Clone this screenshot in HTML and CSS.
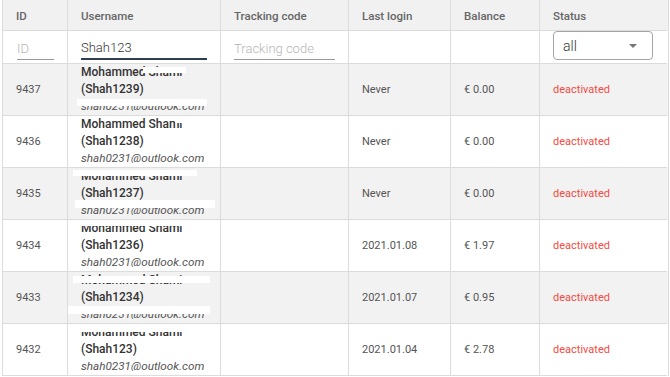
FILE: index.html
```html
<!DOCTYPE html>
<html lang="en">
<head>
<meta charset="utf-8">
<title>Users</title>
<link rel="stylesheet" href="styles.css">
</head>
<body>
<div class="table">
  <div class="row head">
    <div class="cell">ID</div>
    <div class="cell">Username</div>
    <div class="cell">Tracking code</div>
    <div class="cell">Last login</div>
    <div class="cell">Balance</div>
    <div class="cell">Status</div>
  </div>
  <div class="row filter">
    <div class="cell"><input class="inp inp-id" placeholder="ID"></div>
    <div class="cell"><input class="inp inp-user" value="Shah123"></div>
    <div class="cell"><input class="inp inp-track" placeholder="Tracking code"></div>
    <div class="cell"></div>
    <div class="cell"></div>
    <div class="cell cell-select">
      <div class="select"><span>all</span><span class="caret"></span></div>
    </div>
  </div>

  <div class="row data odd">
    <div class="cell">9437</div>
    <div class="cell usercell">
      <div class="user"><span class="name">Mohammed Shami</span><span class="name">(Shah1239)</span><span class="email">shah0231@outlook.com</span></div>
      <span class="redact r37a"></span><span class="redact r37b"></span>
    </div>
    <div class="cell"></div>
    <div class="cell">Never</div>
    <div class="cell">€ 0.00</div>
    <div class="cell status">deactivated</div>
  </div>
  <div class="row data">
    <div class="cell">9436</div>
    <div class="cell usercell">
      <div class="user"><span class="name">Mohammed Shami</span><span class="name">(Shah1238)</span><span class="email">shah0231@outlook.com</span></div>
      <span class="redact r36a"></span>
    </div>
    <div class="cell"></div>
    <div class="cell">Never</div>
    <div class="cell">€ 0.00</div>
    <div class="cell status">deactivated</div>
  </div>
  <div class="row data odd">
    <div class="cell">9435</div>
    <div class="cell usercell">
      <div class="user"><span class="name">Mohammed Shami</span><span class="name">(Shah1237)</span><span class="email">shah0231@outlook.com</span></div>
      <span class="redact r35a"></span><span class="redact r35b"></span>
    </div>
    <div class="cell"></div>
    <div class="cell">Never</div>
    <div class="cell">€ 0.00</div>
    <div class="cell status">deactivated</div>
  </div>
  <div class="row data">
    <div class="cell">9434</div>
    <div class="cell usercell">
      <div class="user"><span class="name">Mohammed Shami</span><span class="name">(Shah1236)</span><span class="email">shah0231@outlook.com</span></div>
      <span class="redact r34a"></span>
    </div>
    <div class="cell"></div>
    <div class="cell">2021.01.08</div>
    <div class="cell">€ 1.97</div>
    <div class="cell status">deactivated</div>
  </div>
  <div class="row data odd">
    <div class="cell">9433</div>
    <div class="cell usercell">
      <div class="user"><span class="name">Mohammed Shami</span><span class="name">(Shah1234)</span><span class="email">shah0231@outlook.com</span></div>
      <span class="redact r33a"></span><span class="redact r33b"></span>
    </div>
    <div class="cell"></div>
    <div class="cell">2021.01.07</div>
    <div class="cell">€ 0.95</div>
    <div class="cell status">deactivated</div>
  </div>
  <div class="row data">
    <div class="cell">9432</div>
    <div class="cell usercell">
      <div class="user"><span class="name">Mohammed Shami</span><span class="name">(Shah123)</span><span class="email">shah0231@outlook.com</span></div>
      <span class="redact r32a"></span>
    </div>
    <div class="cell"></div>
    <div class="cell">2021.01.04</div>
    <div class="cell">€ 2.78</div>
    <div class="cell status">deactivated</div>
  </div>
</div>
</body>
</html>
```
FILE: styles.css
```css
html, body {
  margin: 0;
  padding: 0;
  background: #fff;
}
body {
  font-family: Roboto, "Liberation Sans", sans-serif;
  font-size: 11px;
  color: #555;
}
.table {
  margin-left: 2px;
  width: 666px;
  border-right: 1px solid #dcdcdc;
  box-sizing: content-box;
}
.row {
  display: grid;
  grid-template-columns: 65px 153px 128px 102px 89px 128px;
}
.cell {
  border-left: 1px solid #dcdcdc;
  border-bottom: 1px solid #dcdcdc;
  padding-left: 13px;
  display: flex;
  align-items: center;
  box-sizing: border-box;
  min-width: 0;
}
.head {
  background: #f1f1f1;
}
.head .cell {
  height: 31px;
  font-weight: 500;
  color: #666;
  font-size: 11.5px;
  padding-top: 1px;
}
.filter {
  background: #fff;
}
.filter .cell {
  height: 33px;
  align-items: flex-end;
  padding-bottom: 3px;
}
.inp {
  font-family: Roboto, "Liberation Sans", sans-serif;
  font-size: 13px;
  font-weight: 300;
  color: #333;
  border: none;
  border-bottom: 1px solid #9a9a9a;
  padding: 0 0 1px 0;
  margin: 0;
  height: 22px;
  box-sizing: border-box;
  outline: none;
  background: transparent;
}
.inp::placeholder {
  color: #b5b5b5;
}
.inp-id {
  width: 37px;
  margin-left: 1px;
}
.inp-user {
  width: 126px;
  border-bottom: 2px solid #2c3e50;
}
.inp-track {
  width: 101px;
}
.filter .cell-select {
  align-items: flex-start;
  padding-bottom: 0;
}
.select {
  width: 100px;
  height: 29px;
  box-sizing: border-box;
  border: 1px solid #a5a5a5;
  border-radius: 4px;
  display: flex;
  align-items: center;
  justify-content: space-between;
  padding: 0 15px 0 9px;
  font-size: 14px;
  font-weight: 300;
  color: #333;
}
.caret {
  width: 0;
  height: 0;
  border-left: 4px solid transparent;
  border-right: 4px solid transparent;
  border-top: 4px solid #757575;
  margin-top: 1px;
}
.data .cell {
  height: 52px;
}
.odd {
  background: #f2f2f2;
}
.status {
  color: #f44a42;
}
.usercell {
  position: relative;
  align-items: flex-start;
}
.user {
  display: flex;
  flex-direction: column;
  height: 47px;
  overflow: hidden;
  line-height: 17px;
  font-size: 12px;
  white-space: nowrap;
}
.name {
  font-weight: 500;
  color: #333;
}
.email {
  font-style: italic;
  font-size: 11.7px;
  color: #555;
}
.redact {
  position: absolute;
  background: #fff;
}
.r37a { left: 75px; top: 3px; width: 43px; height: 6px; }
.r37b { left: 9px; top: 35px; width: 130px; height: 7px; }
.r36a { left: 107px; top: 2px; width: 22px; height: 5px; }
.r35a { left: 5px; top: 2px; width: 124px; height: 6px; }
.r35b { left: 7px; top: 32px; width: 140px; height: 8px; }
.r34a { left: 5px; top: 0; width: 120px; height: 6px; }
.r33a { left: 5px; top: 4px; width: 137px; height: 7px; }
.r33b { left: 0; top: 34px; width: 142px; height: 8px; }
.r32a { left: 5px; top: 0; width: 120px; height: 8px; }
```
